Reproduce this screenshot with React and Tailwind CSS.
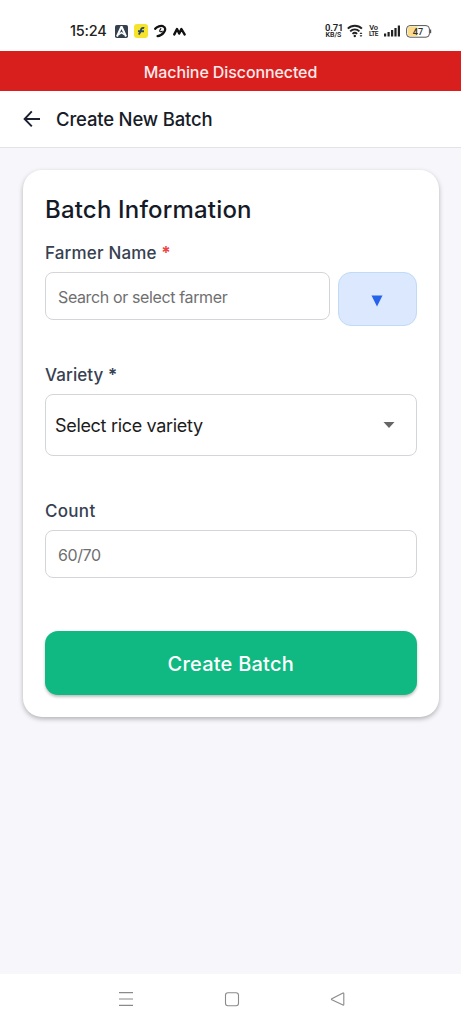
import React, { useState } from 'react';

function StatusBar() {
  return (
    <div className="flex h-[51px] items-start justify-between bg-white pt-[21px] pl-[70px] pr-[29px] text-[#222]">
      <div className="flex h-5 items-center">
        <span className="w-[45px] whitespace-nowrap text-[14.5px] font-medium tracking-[-0.2px]">15:24</span>
        <svg width="13" height="13" viewBox="0 0 13 13">
          <rect width="13" height="13" rx="1.8" fill="#34424f" />
          <path d="M6.5 1.5 L2 11.5 M6.5 1.5 L11 11.5" stroke="#fff" strokeWidth="2" fill="none" />
          <path d="M3.5 9.8 L6.5 7.6 L9.5 9.8" stroke="#fff" strokeWidth="1.4" fill="none" />
        </svg>
        <svg className="ml-[6px]" width="14" height="14" viewBox="0 0 14 14">
          <rect width="14" height="14" rx="3" fill="#f6e32b" />
          <path d="M10.2 4 C8 3.4 7.3 4.4 6.8 6.4 C6.4 8.4 6 9.6 4.6 10.6 M4 7.2 H10" stroke="#2d4a60" strokeWidth="1.9" fill="none" />
        </svg>
        <svg className="ml-[5px]" width="14" height="14" viewBox="0 0 14 14">
          <path d="M2.2 4.8 C4 2.4 7.6 1.4 10 2.2 C13 3.4 12.6 6.4 10.8 8.6 C9.2 10.6 7 12 4.6 12.2" stroke="#111" strokeWidth="2.3" strokeLinecap="round" fill="none" />
          <path d="M8.2 4.4 C7.2 5.6 6 7 7 7.6 C7.8 8 8.8 7.6 9.6 7" stroke="#111" strokeWidth="1.1" fill="none" />
        </svg>
        <svg className="ml-[6px]" width="13" height="9" viewBox="0 0 13 9">
          <path d="M1.3 7.4 L4 2 L6.2 6.6 L8.4 2 L11.6 7.4" stroke="#111" strokeWidth="2.4" strokeLinejoin="round" strokeLinecap="round" fill="none" />
        </svg>
      </div>
      <div className="flex h-5 items-center font-['Roboto',sans-serif]">
        <div className="w-[17px] text-center font-semibold">
          <div className="text-[9.5px] leading-[8px] tracking-[-0.2px]">0.71</div>
          <div className="-mx-1 text-[7px] leading-[7px]">KB/S</div>
        </div>
        <svg className="ml-[5px]" width="17" height="14" viewBox="0 0 17 14">
          <g fill="none" stroke="#222" strokeWidth="1.9">
            <path d="M0.8 4.7 C4.7 0.8 11 0.8 14.9 4.7" />
            <path d="M3.2 7.4 C5.8 4.7 9.8 4.7 12.4 7.4" />
            <path d="M5.5 9.9 C7 8.5 8.6 8.5 10.1 9.9" />
          </g>
          <circle cx="7.8" cy="12" r="1.2" fill="#222" />
          <path d="M12.6 10 L14 8.2 L15.4 10 Z M12.6 11.3 L14 13.1 L15.4 11.3 Z" fill="#222" />
        </svg>
        <div className="ml-[5px] w-[9px] text-center font-semibold leading-[7px]">
          <div className="text-[7.5px] tracking-[-0.2px]">Vo</div>
          <div className="-mx-1 text-[6.5px] tracking-[-0.4px]">LTE</div>
        </div>
        <svg className="ml-[6px]" width="16" height="12" viewBox="0 0 16 12">
          <path d="M0 8.5h2.2v3h-2.2z M3.5 7h2.2v4.5h-2.2z M7 5h2.2v6.5h-2.2z M10.4 3h2.2v8.5h-2.2z M13.8 0.5h2.2v11h-2.2z" fill="#222" />
        </svg>
        <svg className="ml-[6px]" width="26" height="13" viewBox="0 0 26 13">
          <rect x="0.6" y="0.6" width="22.8" height="11.6" rx="3.4" fill="#fff" stroke="#555" strokeWidth="1" />
          <path d="M4 1.6 H11.5 V11.2 H4 Q1.7 11.2 1.7 9 V3.8 Q1.7 1.6 4 1.6 Z" fill="#fbdc8c" />
          <path d="M24.6 4.5 V8.3" stroke="#555" strokeWidth="1.2" />
          <text x="12" y="9.6" textAnchor="middle" fontSize="9.2" fontWeight="500" fill="#333">47</text>
        </svg>
      </div>
    </div>
  );
}

function NavBar() {
  return (
    <div className="flex h-[50px] items-center bg-white pl-[118px]">
      <svg width="16" height="16" viewBox="0 0 16 16" fill="none" stroke="#8a8a8a" strokeWidth="1.2">
        <path d="M1 1.7 H15 M1 8 H15 M1 14.3 H15" />
      </svg>
      <svg className="ml-[90px]" width="16" height="16" viewBox="0 0 16 16" fill="none" stroke="#8a8a8a" strokeWidth="1.1">
        <rect x="1.5" y="1.8" width="13" height="13" rx="2.5" />
      </svg>
      <svg className="ml-[90px]" width="16" height="16" viewBox="0 0 16 16" fill="none" stroke="#8a8a8a" strokeWidth="1.1" strokeLinejoin="round">
        <path d="M13 2 Q13.8 1.8 13.8 2.6 V13.6 Q13.8 14.4 13 14.1 L1.8 8.8 Q1 8.2 1.8 7.7 Z" />
      </svg>
    </div>
  );
}

export default function App() {
  const [farmer, setFarmer] = useState('');
  const [count, setCount] = useState('');

  return (
    <div className="flex h-[1024px] w-[461px] flex-col bg-[#f6f6fb] font-['Inter',sans-serif]">
      <StatusBar />
      <div className="flex h-10 items-center justify-center bg-[#d91e1e] pt-0.5 text-[16px] font-medium tracking-[-0.1px] text-[#fdeaea]">
        Machine Disconnected
      </div>

      {/* Header */}
      <div className="flex h-[57px] items-center border-b border-[#e2e3e8] bg-white pl-[23px]">
        <svg width="18" height="18" viewBox="0 0 18 18" fill="none" stroke="#1b2130" strokeWidth="1.9">
          <path d="M17 9 H2 M8.8 1.4 L1.6 9 L8.8 16.4" />
        </svg>
        <h1 className="ml-[15px] pt-0.5 text-[18.5px] font-medium tracking-[-0.18px] text-[#171c28]">Create New Batch</h1>
      </div>

      {/* Form */}
      <div className="flex-1 px-[22.5px] pt-[22px]">
        <div className="h-[547px] rounded-[19px] bg-white pt-6 pr-[22px] pl-[22.5px] shadow-[0_2px_5px_rgba(0,0,0,0.28)]">
          <h2 className="h-8 text-[24px] leading-8 font-medium tracking-[0.18px] text-[#151a28]">Batch Information</h2>
          <label className="mt-[17px] block h-5 text-[17px] leading-5 font-medium tracking-[0.16px] text-[#374151]">
            Farmer Name <span className="font-bold text-[#ef4444]">*</span>
          </label>
          <div className="mt-[9px] flex items-start justify-between">
            <input
              value={farmer}
              onChange={e => setFarmer(e.target.value)}
              placeholder="Search or select farmer"
              className="h-12 w-[284.5px] rounded-[8px] border border-[#d4d5d8] px-3 pt-0.5 text-[16px] tracking-[-0.37px] placeholder:text-[#6f6f6f]"
            />
            <button className="flex h-[54px] w-[78.5px] items-center justify-center rounded-[13px] border border-[#bfdbf7] bg-[#dbe8fd] pt-[3px]">
              <svg width="12" height="12" viewBox="0 0 12 12">
                <path d="M0.5 0.5 H11.5 L6 11.5 Z" fill="#2563eb" />
              </svg>
            </button>
          </div>

          <label className="mt-[39px] block h-5 text-[17px] leading-5 font-medium tracking-[0.1px] text-[#374151]">
            Variety <span className="font-semibold">*</span>
          </label>
          <button className="mt-[9px] flex h-[62px] w-full items-center justify-between rounded-[8px] border border-[#d4d5d8] pr-[21px] pl-[9px]">
            <span className="pt-px text-[18px] tracking-[-0.32px] text-[#1c1c1c]">Select rice variety</span>
            <svg width="12" height="6" viewBox="0 0 12 6">
              <path d="M0.5 0 H11.5 L6 6 Z" fill="#666" />
            </svg>
          </button>

          <label className="mt-[45px] block h-5 text-[17px] leading-5 font-medium tracking-[0.3px] text-[#374151]">Count</label>
          <input
            value={count}
            onChange={e => setCount(e.target.value)}
            placeholder="60/70"
            className="mt-[9px] h-12 w-full rounded-[8px] border border-[#d4d5d8] px-3 pt-0.5 text-[16px] tracking-[-0.4px] placeholder:text-[#6f6f6f]"
          />

          <button className="mt-[53px] h-16 w-full rounded-[13px] bg-[#10b981] pt-0.5 text-[20px] font-medium tracking-[0.22px] text-white shadow-[0_2px_3px_rgba(0,0,0,0.25)]">
            Create Batch
          </button>
        </div>
      </div>

      <NavBar />
    </div>
  );
}
